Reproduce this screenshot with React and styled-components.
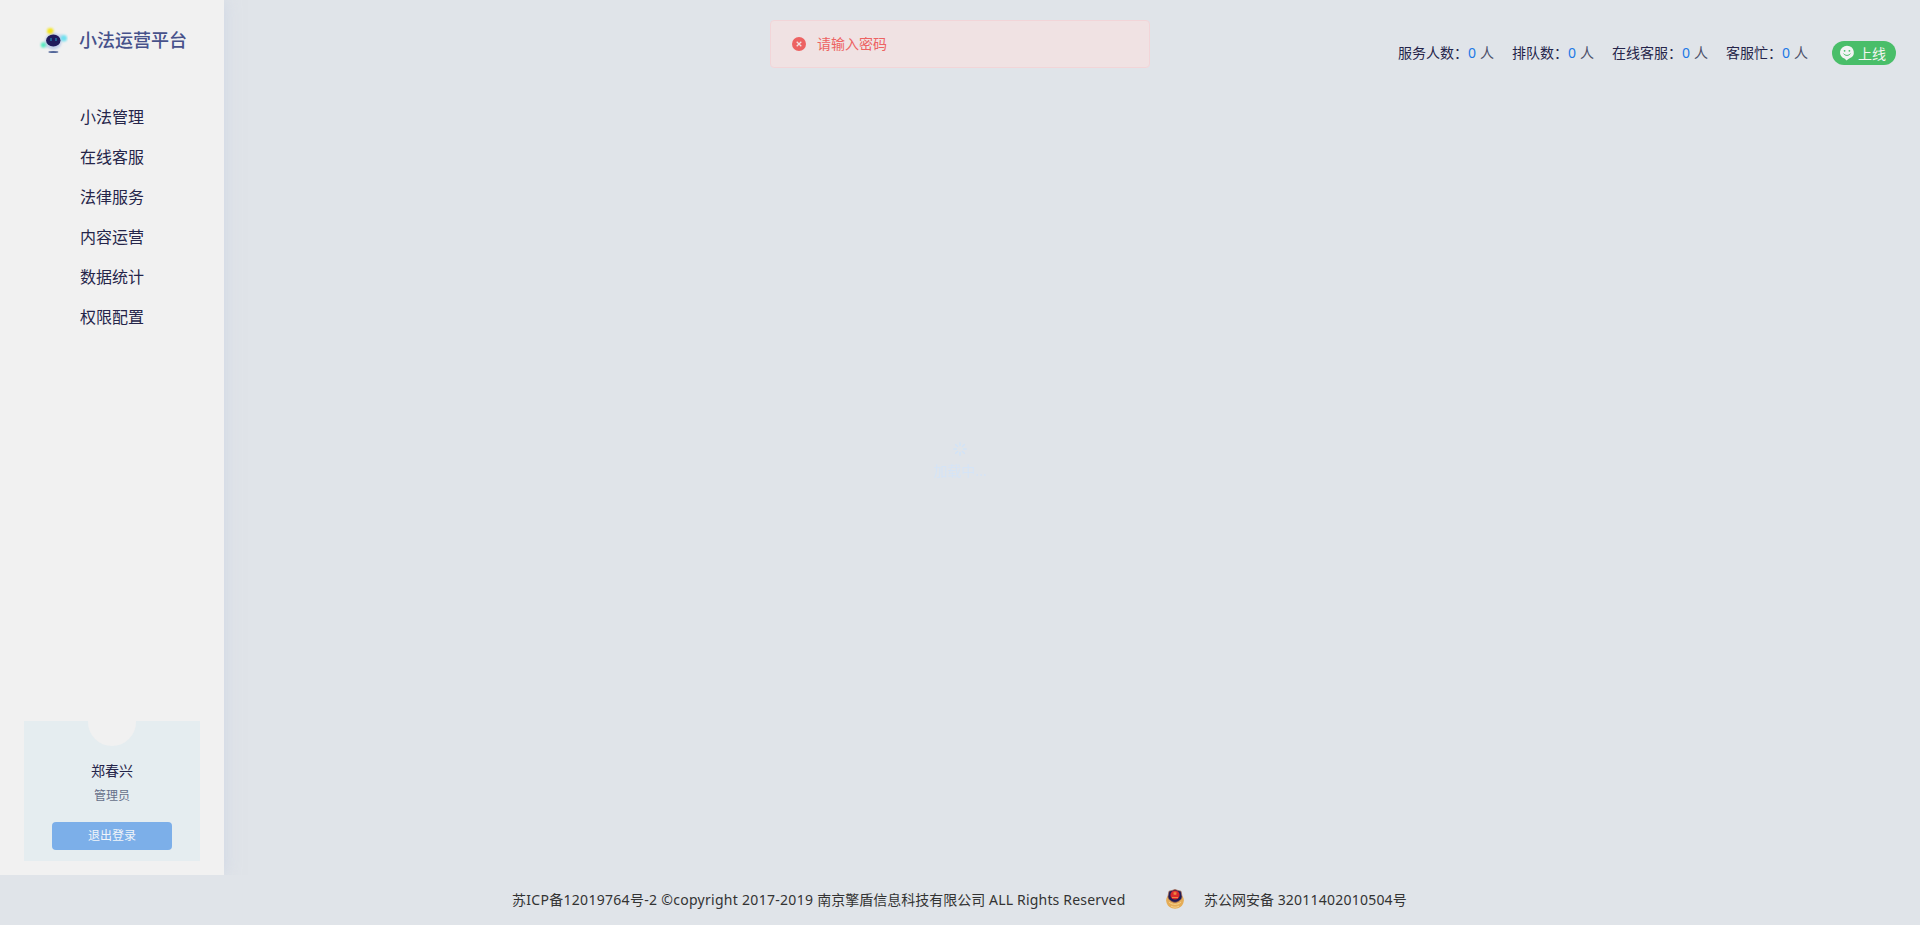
import React from 'react';
import styled, { createGlobalStyle } from 'styled-components';

const GlobalStyle = createGlobalStyle`
  * { box-sizing: border-box; }
  body {
    margin: 0;
    background: #e0e4e9;
    color: #25254a;
    font-family: "Noto Sans", "Noto Sans CJK SC", sans-serif;
    font-size: 14px;
    font-weight: 400;
    overflow: hidden;
  }
`;

const Page = styled.div`
  display: flex;
  flex-direction: column;
  height: 925px;
`;

const Body = styled.div`
  display: flex;
  height: 875px;
  overflow: hidden;
`;

const Sidebar = styled.aside`
  display: flex;
  flex-direction: column;
  width: 224px;
  flex: none;
  padding-bottom: 14px;
  background: #f1f1f1;
  box-shadow: 0 0 16px rgba(190, 202, 225, 0.5);
`;

const Brand = styled.div`
  display: flex;
  align-items: center;
  height: 80px;
  padding-left: 39px;
`;

const BrandName = styled.h1`
  margin: 0 0 0 11px;
  font-size: 18px;
  line-height: 26px;
  font-weight: 500;
  color: #47528b;
`;

const Menu = styled.nav`
  display: flex;
  flex-direction: column;
  padding-top: 17px;
`;

const MenuItem = styled.a`
  height: 40px;
  line-height: 40px;
  font-size: 16px;
  text-align: center;
`;

const UserCard = styled.section`
  display: flex;
  flex-direction: column;
  align-items: center;
  width: 176px;
  height: 140px;
  margin: auto auto 0;
  background: #e5edf0;
`;

const AvatarSlot = styled.div`
  width: 48px;
  height: 25px;
  border-radius: 0 0 24px 24px;
  background: #f1f1f1;
`;

const UserName = styled.div`
  margin-top: 15px;
  line-height: 20px;
`;

const UserRole = styled.div`
  margin-top: 5px;
  font-size: 12px;
  line-height: 20px;
  color: #66708a;
`;

const LogoutButton = styled.button`
  width: 120px;
  height: 28px;
  margin-top: 16px;
  padding: 0;
  border: 0;
  border-radius: 4px;
  background: #7cafe9;
  color: #f1f5f9;
  font: 400 12px/28px "Noto Sans", "Noto Sans CJK SC", sans-serif;
`;

const Main = styled.main`
  display: flex;
  flex: 1;
  justify-content: flex-end;
  align-items: flex-start;
  padding: 41px 24px 0 0;
`;

const Stats = styled.div`
  display: flex;
  gap: 18px;
  margin-right: 24px;
`;

const Stat = styled.div`
  display: flex;
  height: 24px;
  line-height: 24px;
  white-space: nowrap;
`;

const Count = styled.span`
  width: 12px;
  color: #1b78e6;
`;

const Unit = styled.span`
  width: 14px;
  color: #4c506a;
`;

const OnlineButton = styled.button`
  display: flex;
  align-items: center;
  width: 64px;
  height: 24px;
  padding: 0 0 0 7px;
  gap: 3px;
  border: 0;
  border-radius: 12px;
  background: #49be69;
  color: #f1f5f1;
  font: 400 14px/24px "Noto Sans", "Noto Sans CJK SC", sans-serif;
  white-space: nowrap;
`;

const OnlineLabel = styled.span`
  margin-top: 1px;
`;

const Footer = styled.footer`
  display: flex;
  justify-content: center;
  align-items: center;
  height: 50px;
  padding-bottom: 2px;
  color: #333;
  white-space: nowrap;
`;

const Copyright = styled.span`
  width: 613px;
  margin-right: 41px;
`;

const Record = styled.span`
  width: 204px;
  margin-left: 20px;
`;

const Tracked = styled.span`
  letter-spacing: ${({ $spacing }) => $spacing}px;
`;

const Toast = styled.div`
  position: fixed;
  top: 20px;
  left: 770px;
  display: flex;
  align-items: center;
  width: 380px;
  height: 48px;
  padding-left: 21px;
  gap: 11px;
  border: 1px solid #f2d5d8;
  border-radius: 4px;
  background: #f0e2e3;
  color: #ed6262;
  line-height: 20px;
`;

const Loading = styled.div`
  position: fixed;
  top: 442px;
  left: 934px;
  display: flex;
  flex-direction: column;
  align-items: center;
  width: 52px;
  gap: 5px;
  color: #d5e4f6;
  line-height: 20px;
  white-space: nowrap;
`;

function RobotLogo() {
  return (
    <svg width="29" height="28" viewBox="0 0 29 28">
      <defs>
        <filter id="soft" x="-30%" y="-30%" width="160%" height="160%">
          <feGaussianBlur stdDeviation="0.8" />
        </filter>
      </defs>
      <g filter="url(#soft)">
        <ellipse cx="14.5" cy="15" rx="12" ry="5" transform="rotate(-24 14.5 15)" fill="#cbd8ee" />
        <circle cx="14.3" cy="15.4" r="8.3" fill="#c3d0e9" />
        <circle cx="11.3" cy="5.3" r="3.2" fill="#f4e51a" />
        <circle cx="24.8" cy="12.2" r="3.2" fill="#71e1f0" />
        <circle cx="4.5" cy="19" r="2.7" fill="#55e9c0" />
      </g>
      <ellipse cx="14.3" cy="14.5" rx="7.2" ry="6" fill="#201b5c" />
      <path d="M12 12v3M17 12v3" stroke="#1f7ba8" strokeWidth="1.4" />
      <ellipse cx="14.4" cy="26" rx="5" ry="1" fill="#536799" />
    </svg>
  );
}

function ErrorIcon() {
  return (
    <svg width="14" height="14" viewBox="0 0 14 14">
      <circle cx="7" cy="7" r="7" fill="#ed6262" />
      <path d="m4.7 4.7 4.6 4.6m0-4.6L4.7 9.3" stroke="#f0e2e3" strokeWidth="1.3" />
    </svg>
  );
}

function SmileIcon() {
  return (
    <svg width="16" height="16" viewBox="0 0 16 16">
      <path d="M8 .8a7 6.6 0 0 1 2.2 12.8L7.4 15.6 5.900 13.700A7 6.600 0 0 1 8 .8Z" fill="#f1f3f3" />
      <circle cx="5.6" cy="5.8" r="0.9" fill="#49be69" />
      <circle cx="10.4" cy="5.8" r="0.9" fill="#49be69" />
      <path d="M4.600 8.600c1.600 2.400 5.200 2.400 6.800 0" fill="none" stroke="#49be69" />
    </svg>
  );
}

function PoliceBadge() {
  return (
    <svg width="18" height="20" viewBox="0 0 18 20">
      <path d="M1.8 7C-1 10 0 15 3 17.500c2 1.600 4 2 6 2.300 2-.3 4-.7 6-2.300 3-2.500 4-7.500 1.200-10.500Z" fill="#e5ad58" />
      <path d="M9 .4 12 1.500l3 .7 1 5c0 3.300-3 5.600-7 6.200-4-.6-7-2.900-7-6.200l1-5 3-.7Z" fill="#211c55" stroke="#a86b52" strokeWidth=".7" />
      <circle cx="9" cy="6" r="4.600" fill="#d9292c" />
      <path d="m9 2 .7 1.500 1.600.2-1.200 1 .3 1.600L9 5.500l-1.400.8.3-1.600-1.200-1 1.600-.2ZM6 8h6v1H6Z" fill="#ee8740" />
      <path d="M3 13c2 2 4 2.300 6 2.300s4-.3 6-2.300M5 17.200c1.500.8 2.800 1 4 1s2.500-.2 4-1" fill="none" stroke="#f6d08c" strokeWidth="1" />
    </svg>
  );
}

function Spinner() {
  const spokes = [0, 45, 90, 135, 180, 225, 270, 315];
  return (
    <svg width="14" height="14" viewBox="0 0 14 14" stroke="#d0e3f9" strokeWidth="1.3">
      {spokes.map((angle) => (
        <path key={angle} d="M7 .3v3.700" transform={`rotate(${angle} 7 7)`} />
      ))}
    </svg>
  );
}

const menuItems = ['小法管理', '在线客服', '法律服务', '内容运营', '数据统计', '权限配置'];
const stats = ['服务人数：', '排队数：', '在线客服：', '客服忙：'];

export default function App() {
  return (
    <>
      <GlobalStyle />
      <Page>
        <Body>
          <Sidebar>
            <Brand>
              <RobotLogo />
              <BrandName>小法运营平台</BrandName>
            </Brand>
            <Menu>
              {menuItems.map((item) => <MenuItem key={item}>{item}</MenuItem>)}
            </Menu>
            <UserCard>
              <AvatarSlot />
              <UserName>郑春兴</UserName>
              <UserRole>管理员</UserRole>
              <LogoutButton>退出登录</LogoutButton>
            </UserCard>
          </Sidebar>
          <Main>
            <Stats>
              {stats.map((label) => (
                <Stat key={label}>{label}<Count>0</Count><Unit>人</Unit></Stat>
              ))}
            </Stats>
            <OnlineButton><SmileIcon /><OnlineLabel>上线</OnlineLabel></OnlineButton>
          </Main>
        </Body>
        <Footer>
          <Copyright>
            <Tracked $spacing={0.29}>苏ICP备12019764号-2 ©copyright 2017-2019 </Tracked>
            南京擎盾信息科技有限公司
            <Tracked $spacing={0.19}> ALL Rights Reserved</Tracked>
          </Copyright>
          <PoliceBadge />
          <Record>苏公网安备 <Tracked $spacing={0.22}>32011402010504号</Tracked></Record>
        </Footer>
      </Page>
      <Toast><ErrorIcon />请输入密码</Toast>
      <Loading><Spinner />加载中...</Loading>
    </>
  );
}
